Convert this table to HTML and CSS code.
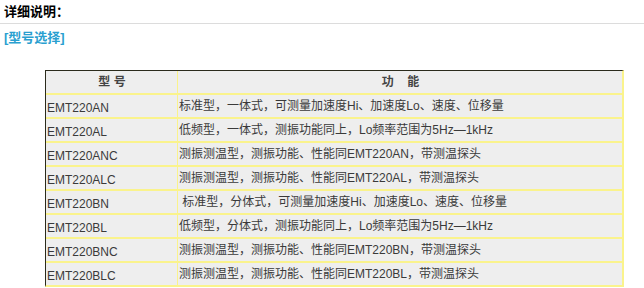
FILE: index.html
```html
<!DOCTYPE html>
<html lang="zh">
<head>
<meta charset="utf-8">
<link rel="stylesheet" href="styles.css">
</head>
<body>
<div class="page">
  <div class="title">详细说明：</div>
  <div class="section">[型号选择]</div>
  <table class="models">
    <tr class="head"><th class="c1">型 号</th><th class="c2">功&nbsp;&nbsp;&nbsp;&nbsp;能</th></tr>
    <tr><td>EMT220AN</td><td>标准型，一体式，可测量加速度Hi、加速度Lo、速度、位移量</td></tr>
    <tr><td>EMT220AL</td><td>低频型，一体式，测振功能同上，Lo频率范围为5Hz—1kHz</td></tr>
    <tr><td>EMT220ANC</td><td>测振测温型，测振功能、性能同EMT220AN，带测温探头</td></tr>
    <tr><td>EMT220ALC</td><td>测振测温型，测振功能、性能同EMT220AL，带测温探头</td></tr>
    <tr><td>EMT220BN</td><td>&nbsp;标准型，分体式，可测量加速度Hi、加速度Lo、速度、位移量</td></tr>
    <tr><td>EMT220BL</td><td>低频型，分体式，测振功能同上，Lo频率范围为5Hz—1kHz</td></tr>
    <tr><td>EMT220BNC</td><td>测振测温型，测振功能、性能同EMT220BN，带测温探头</td></tr>
    <tr><td>EMT220BLC</td><td>测振测温型，测振功能、性能同EMT220BL，带测温探头</td></tr>
  </table>
</div>
</body>
</html>
```
FILE: styles.css
```css
html, body {
  margin: 0;
  padding: 0;
  background: #ffffff;
}
.page {
  font-family: "Liberation Sans", "Noto Sans CJK SC", sans-serif;
  font-size: 12px;
  color: #3a3a3a;
}
.title {
  height: 23px;
  line-height: 24px;
  padding-left: 4px;
  font-size: 13px;
  font-weight: bold;
  color: #000000;
  border-bottom: 1px solid #dcdcdc;
}
.section {
  padding: 5px 0 0 4px;
  height: 21px;
  line-height: 18px;
  font-size: 13px;
  font-weight: bold;
  color: #2a9fd0;
}
.models {
  margin: 20px 0 0 45px;
  width: 579px;
  border-collapse: separate;
  border-spacing: 0;
  border-top: 1px solid #2b2b1c;
  border-left: 1px solid #2b2b1c;
  border-right: 2px solid #faf38c;
  border-bottom: 2px solid #faf38c;
}
.models th,
.models td {
  background: #eeeeee;
  height: 22px;
  line-height: 18px;
  vertical-align: middle;
  padding: 0 0 0 1px;
  border-right: 1px solid #faf38c;
  border-bottom: 2px solid #faf38c;
  text-align: left;
  font-weight: normal;
  white-space: nowrap;
}
.models td:first-child {
  padding-top: 4px;
  height: 18px;
}
.models tr td:last-child,
.models tr th:last-child {
  border-right: none;
}
.models tr:last-child td {
  border-bottom: none;
}
.models th {
  font-weight: bold;
  text-align: center;
  color: #444444;
}
.models .c1 {
  width: 130px;
}
```
